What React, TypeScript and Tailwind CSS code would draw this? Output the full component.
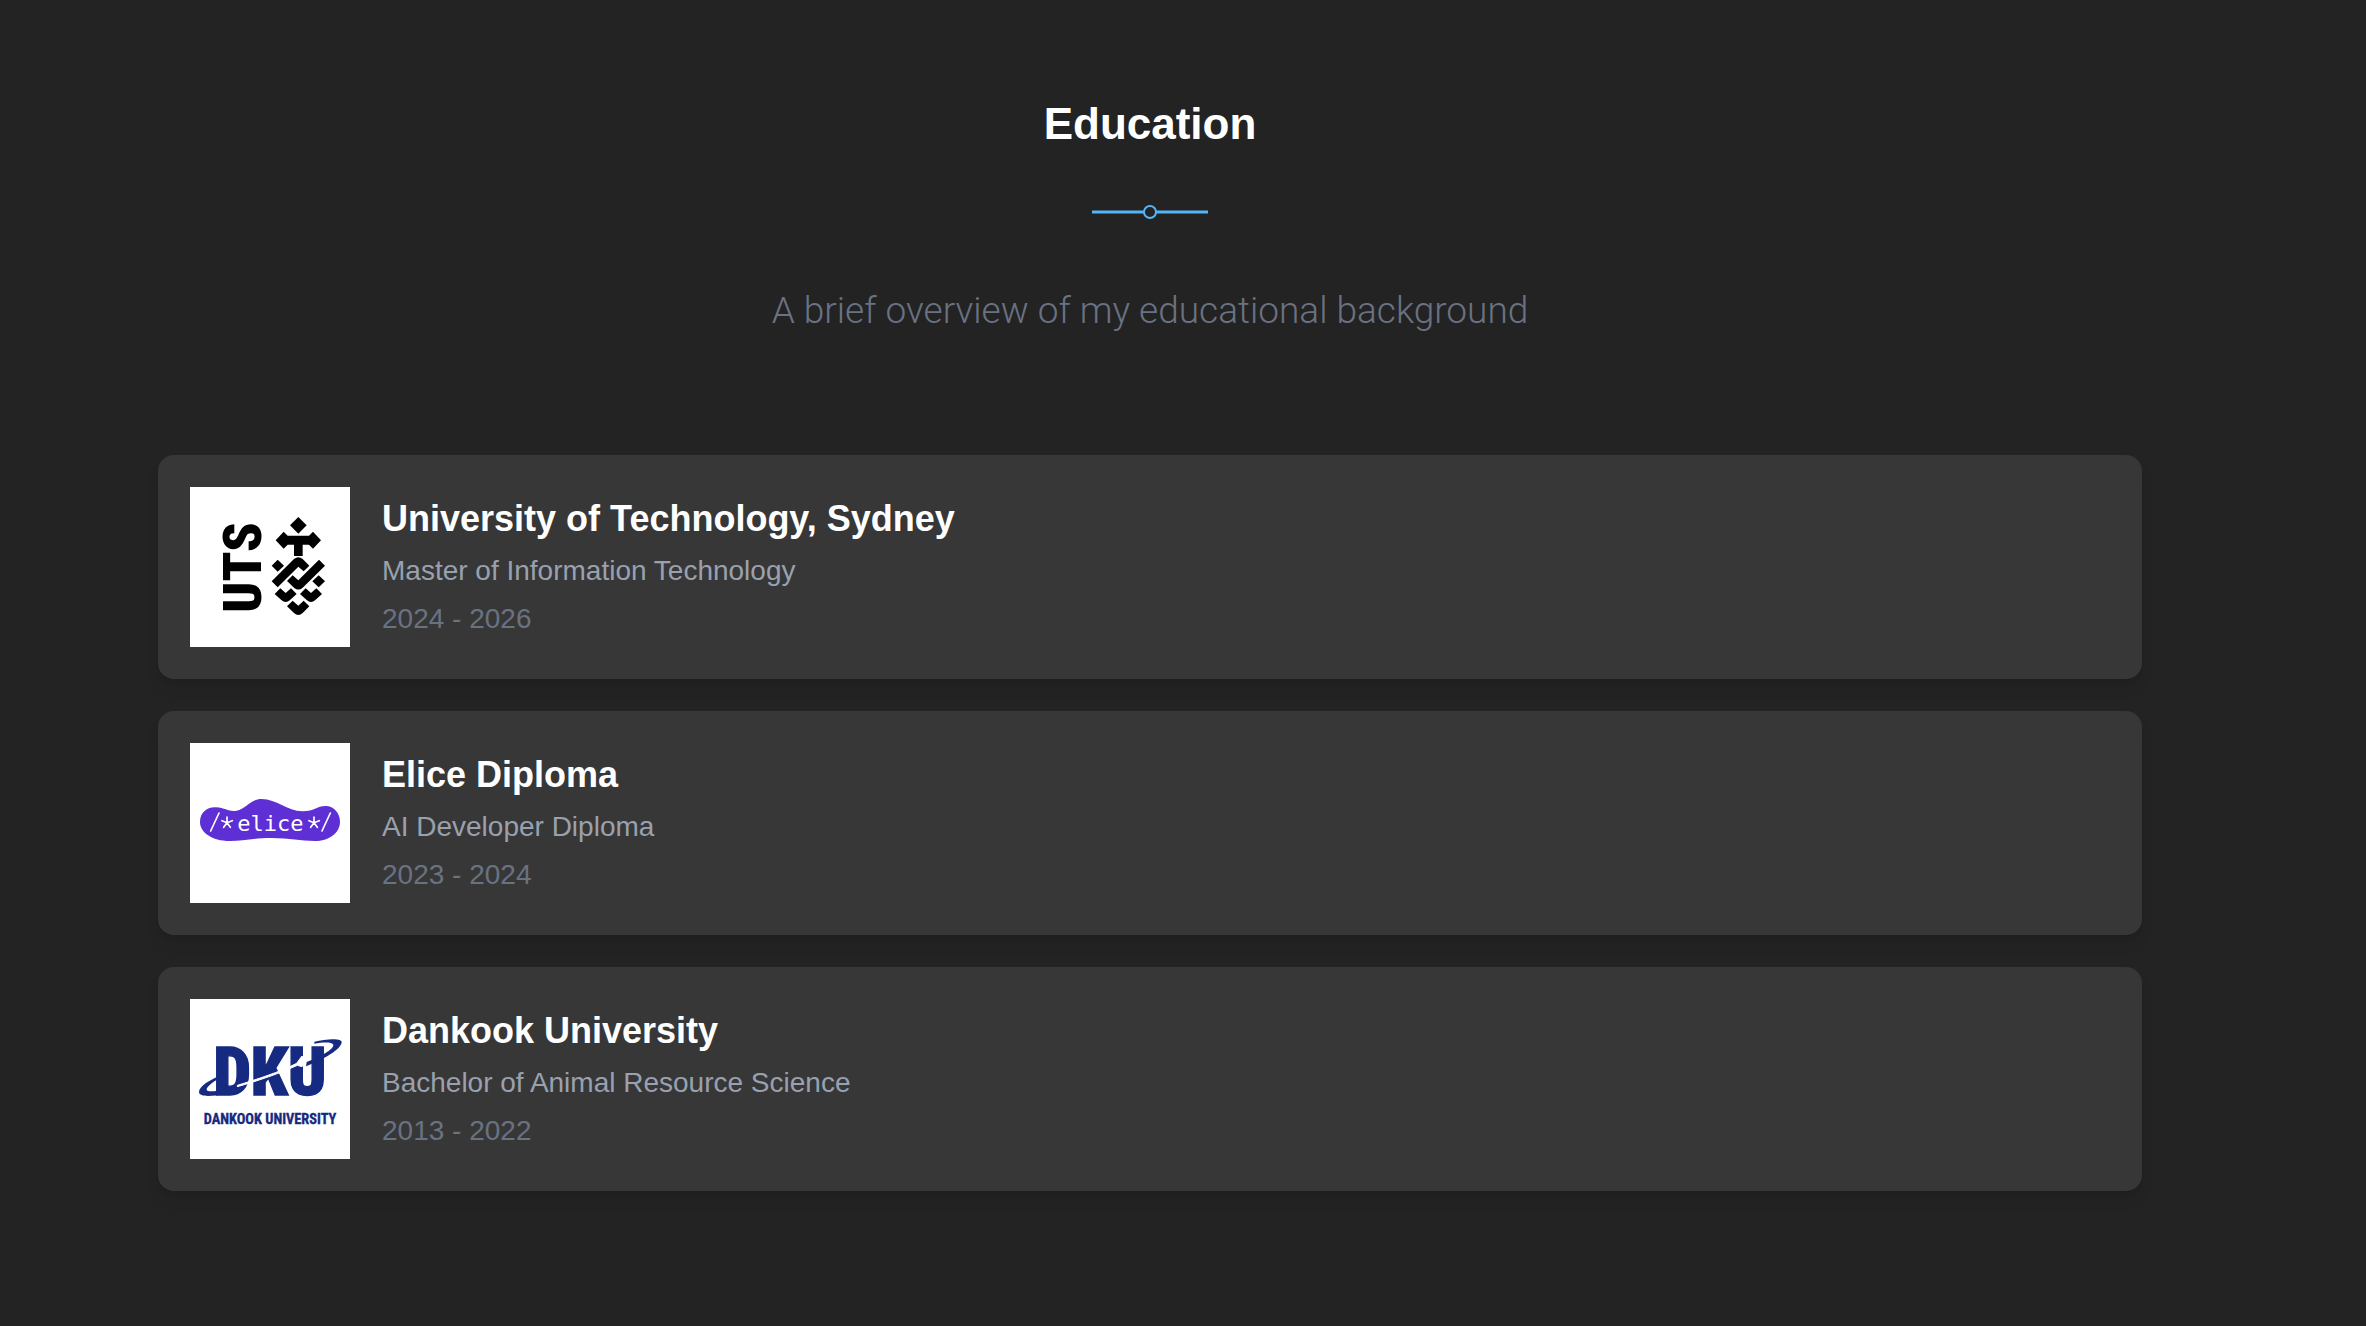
import type { ReactNode } from "react";

function UtsLogo() {
  return (
    <svg viewBox="30 21 480 480" className="size-full" role="img" aria-label="UTS logo">
      <text
        transform="translate(244 398) rotate(-90)"
        className="font-['Roboto_Condensed','Liberation_Sans',sans-serif] text-[162px] font-black"
      >
        UTS
      </text>
      <g>
        <path d="M355 111L380 136L355 161L330 136Z" />
        <path d="M311 155L323 167H387L399 155L423 181L399 206L387 194H368V228H342V194H323L311 206L287 181Z" />
        <path d="M293 239L312 257L293 275L275 257Z" />
        <path d="M416 286L435 304L416 322L397 304Z" />
        <path d="M275 304L342 237Q355 226 368 237L388 257L371 274L355 260L293 322Z" />
        <path d="M417 239L435 257L368 323Q355 334 342 323L321 303L338 286L355 301Z" />
        <path d="M284 342L301 325L317 339L333 325L350 342L330 360Q317 372 304 360Z" />
        <path d="M360 342L377 325L393 339L409 325L426 342L406 360Q393 372 380 360Z" />
        <path d="M321 379L338 362L355 377L371 362L388 379L368 399Q355 411 342 399Z" />
      </g>
    </svg>
  );
}

function EliceLogo() {
  return (
    <svg viewBox="30 24 480 480" className="size-full" role="img" aria-label="elice logo">
      <path
        fill="#5f2fd6"
        d="M60 261C60 232 82 215 108 217C138 219 148 232 170 227C198 221 212 192 245 192C290 192 320 228 368 229C402 229 410 213 437 213C462 213 480 235 480 260C480 295 445 318 405 318C360 318 330 309 275 309C220 309 190 318 150 318C95 318 60 292 60 261Z"
      />
      <g stroke="#fff" strokeWidth="5" strokeLinecap="round" fill="none">
        <path d="M92 288L117 234M426 288L451 234" />
        <path d="M141 263V246M141 263L126 257M141 263L157 257M141 263L131 277M141 263L151 277" />
        <path d="M402 263V246M402 263L387 257M402 263L418 257M402 263L392 277M402 263L412 277" />
      </g>
      <text
        x="172"
        y="287"
        fill="#fff"
        className="font-['DejaVu_Sans_Mono','Liberation_Mono',monospace] text-[66px]"
      >
        elice
      </text>
    </svg>
  );
}

function DankookLogo() {
  return (
    <svg viewBox="30 27 480 480" className="size-full" role="img" aria-label="Dankook University logo">
      <g fill="#152a80">
        <text
          x="270"
          y="314"
          textAnchor="middle"
          stroke="#152a80"
          strokeWidth="4"
          className="font-['Roboto_Condensed','Liberation_Sans',sans-serif] text-[200px] font-black"
        >
          DKU
        </text>
        <text
          x="270"
          y="403"
          textAnchor="middle"
          stroke="#152a80"
          strokeWidth="1"
          className="font-['Roboto_Condensed','Liberation_Sans',sans-serif] text-[43px] font-bold"
        >
          DANKOOK UNIVERSITY
        </text>
      </g>
      <path d="M172 286C230 268 300 246 350 220L366 198L372 207L384 212L374 220L366 230L352 226C300 250 235 272 172 290Z" fill="#fff" stroke="#fff" strokeWidth="3" />
      <path
        fill="#152a80"
        d="M137 250C90 268 56 290 57 307C59 322 95 319 137 312V297C105 305 82 307 80 299C79 289 105 271 137 255Z"
      />
      <path
        fill="#152a80"
        d="M403 155C440 146 484 144 485 156C485 178 430 208 378 229L380 216C420 200 462 178 460 164C456 155 428 157 403 161Z"
      />
    </svg>
  );
}

type School = { name: string; degree: string; years: string; logo: ReactNode };

const schools: School[] = [
  {
    name: "University of Technology, Sydney",
    degree: "Master of Information Technology",
    years: "2024 - 2026",
    logo: <UtsLogo />,
  },
  {
    name: "Elice Diploma",
    degree: "AI Developer Diploma",
    years: "2023 - 2024",
    logo: <EliceLogo />,
  },
  {
    name: "Dankook University",
    degree: "Bachelor of Animal Resource Science",
    years: "2013 - 2022",
    logo: <DankookLogo />,
  },
];

function SchoolCard({ name, degree, years, logo }: School) {
  return (
    <li className="flex items-center gap-8 rounded-2xl bg-[#373737] p-8 shadow-lg">
      <div className="size-40 shrink-0 bg-white">{logo}</div>
      <div>
        <h3 className="text-[36px] leading-[56px] font-bold text-white">{name}</h3>
        <p className="text-[28px] leading-[48px] text-gray-400">{degree}</p>
        <p className="text-[28px] leading-[48px] text-gray-500">{years}</p>
      </div>
    </li>
  );
}

export default function App() {
  return (
    <main className="min-h-screen bg-[#232323] pt-[92px] pr-56 pb-32 pl-[158px] font-['Liberation_Sans',Arial,sans-serif]">
      <header className="flex flex-col items-center text-center">
        <h2 className="text-[44px] leading-[64px] font-bold text-white">Education</h2>
        <svg
          viewBox="0 0 116 16"
          className="mt-12 h-4 w-[116px]"
          fill="none"
          stroke="#53b5f7"
          aria-hidden="true"
        >
          <path d="M0 8H52M64 8H116" strokeWidth="3" />
          <circle cx="58" cy="8" r="6" strokeWidth="2" />
        </svg>
        <p className="mt-[63px] font-['Roboto','Liberation_Sans',sans-serif] text-[37px] leading-[56px] font-light text-gray-500">
          A brief overview of my educational background
        </p>
      </header>
      <ul className="mt-[116px] flex flex-col gap-8">
        {schools.map((school) => (
          <SchoolCard key={school.name} {...school} />
        ))}
      </ul>
    </main>
  );
}
